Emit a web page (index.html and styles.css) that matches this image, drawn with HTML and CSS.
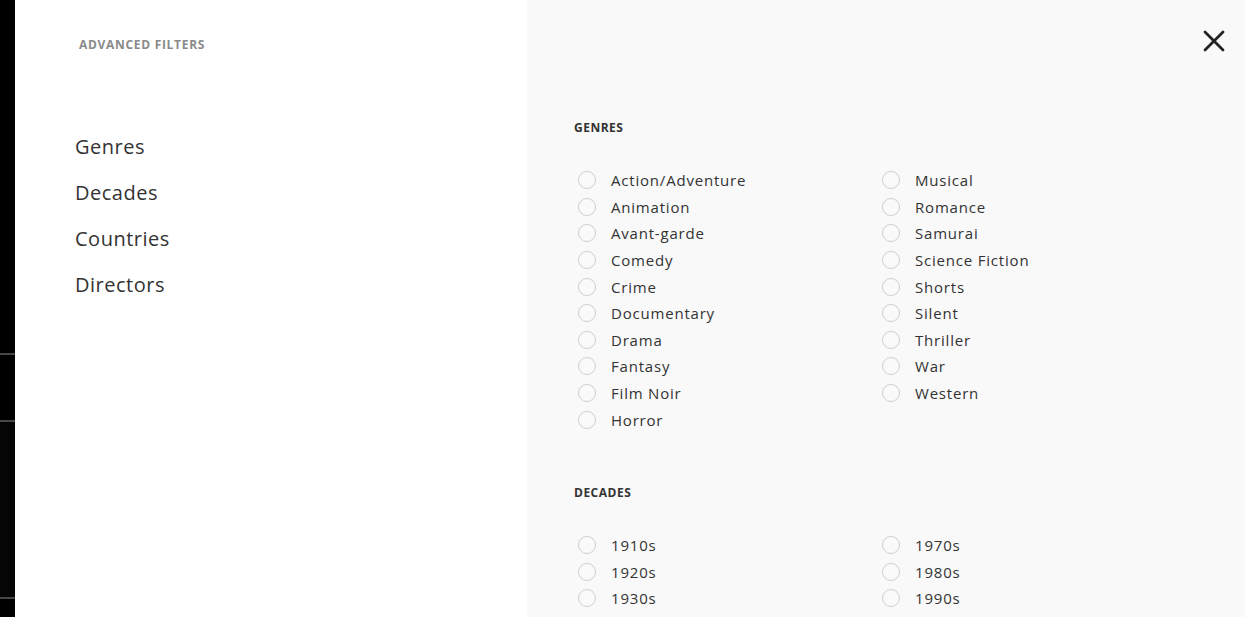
FILE: index.html
```html
<!DOCTYPE html>
<html lang="en">
<head>
<meta charset="utf-8">
<title>Advanced Filters</title>
<link rel="stylesheet" href="styles.css">
</head>
<body>
<div class="app">
  <div class="rail">
    <div class="rail-seg s1"></div>
    <div class="rail-seg s2"></div>
    <div class="rail-seg s3"></div>
    <div class="rail-seg s4"></div>
  </div>
  <aside class="sidebar">
    <div class="sidebar-title">ADVANCED FILTERS</div>
    <nav class="nav">
      <a class="nav-item">Genres</a>
      <a class="nav-item">Decades</a>
      <a class="nav-item">Countries</a>
      <a class="nav-item">Directors</a>
    </nav>
  </aside>
  <main class="content">
    <div class="content-header">
      <button class="close" aria-label="Close">
        <svg width="22" height="22" viewBox="0 0 22 22"><path d="M2 2 L20 20 M20 2 L2 20" stroke="#222" stroke-width="2.8" stroke-linecap="round" fill="none"/></svg>
      </button>
    </div>
    <section class="section first">
      <h3 class="section-title">GENRES</h3>
      <ul class="options">
        <li class="option"><span class="radio"></span>Action/Adventure</li>
        <li class="option"><span class="radio"></span>Animation</li>
        <li class="option"><span class="radio"></span>Avant-garde</li>
        <li class="option"><span class="radio"></span>Comedy</li>
        <li class="option"><span class="radio"></span>Crime</li>
        <li class="option"><span class="radio"></span>Documentary</li>
        <li class="option"><span class="radio"></span>Drama</li>
        <li class="option"><span class="radio"></span>Fantasy</li>
        <li class="option"><span class="radio"></span>Film Noir</li>
        <li class="option"><span class="radio"></span>Horror</li>
        <li class="option"><span class="radio"></span>Musical</li>
        <li class="option"><span class="radio"></span>Romance</li>
        <li class="option"><span class="radio"></span>Samurai</li>
        <li class="option"><span class="radio"></span>Science Fiction</li>
        <li class="option"><span class="radio"></span>Shorts</li>
        <li class="option"><span class="radio"></span>Silent</li>
        <li class="option"><span class="radio"></span>Thriller</li>
        <li class="option"><span class="radio"></span>War</li>
        <li class="option"><span class="radio"></span>Western</li>
      </ul>
    </section>
    <section class="section">
      <h3 class="section-title">DECADES</h3>
      <ul class="options decades">
        <li class="option"><span class="radio"></span>1910s</li>
        <li class="option"><span class="radio"></span>1920s</li>
        <li class="option"><span class="radio"></span>1930s</li>
        <li class="option"><span class="radio"></span>1970s</li>
        <li class="option"><span class="radio"></span>1980s</li>
        <li class="option"><span class="radio"></span>1990s</li>
      </ul>
    </section>
  </main>
</div>
</body>
</html>
```

FILE: styles.css
```css
* { box-sizing: border-box; }
html, body {
  margin: 0;
  padding: 0;
  height: 100%;
  overflow: hidden;
}
body {
  font-family: "Open Sans", "Liberation Sans", sans-serif;
  color: #333;
  background: #fff;
}
.app {
  display: flex;
  height: 617px;
}
.rail {
  width: 15px;
  flex: none;
  background: #000;
  display: flex;
  flex-direction: column;
}
.rail-seg { border-bottom: 2px solid #474747; }
.rail-seg.s1 { height: 355px; }
.rail-seg.s2 { height: 67px; }
.rail-seg.s3 { height: 177px; background: #050505; }
.rail-seg.s4 { flex: 1; border-bottom: none; }

.sidebar {
  width: 512px;
  flex: none;
  background: #fff;
  padding-top: 38px;
}
.sidebar-title {
  padding-left: 64px;
  font-size: 12px;
  line-height: 14px;
  font-weight: 700;
  color: #8a8a8a;
  letter-spacing: 0.7px;
}
.nav {
  margin-top: 72px;
  padding-left: 60px;
  display: flex;
  flex-direction: column;
}
.nav-item {
  font-size: 20px;
  line-height: 46px;
  color: #333;
  letter-spacing: 0.5px;
}

.content {
  flex: 1;
  background: #f9f9f9;
  padding-left: 47px;
}
.content-header {
  display: flex;
  justify-content: flex-end;
  padding: 30px 20px 0 0;
}
.close {
  width: 22px;
  height: 22px;
  padding: 0;
  border: none;
  background: none;
  display: block;
}
.close svg { display: block; }

.section { margin-top: 53px; }
.section.first { margin-top: 69px; }
.section-title {
  margin: 0;
  font-size: 12px;
  line-height: 14px;
  font-weight: 700;
  color: #333;
  letter-spacing: 0.5px;
}
.options {
  list-style: none;
  margin: 32px 0 0;
  padding: 0 0 0 4px;
  display: grid;
  grid-template-columns: 304px 304px;
  grid-template-rows: repeat(10, 26.6px);
  grid-auto-flow: column;
}
.options.decades { grid-template-rows: repeat(3, 26.6px); }
.option {
  display: flex;
  align-items: center;
  font-size: 15px;
  color: #333;
  letter-spacing: 0.8px;
}
.radio {
  width: 18px;
  height: 18px;
  border: 1px solid #cfcfcf;
  border-radius: 50%;
  background: #fafafa;
  margin-right: 15px;
  flex: none;
}
```
